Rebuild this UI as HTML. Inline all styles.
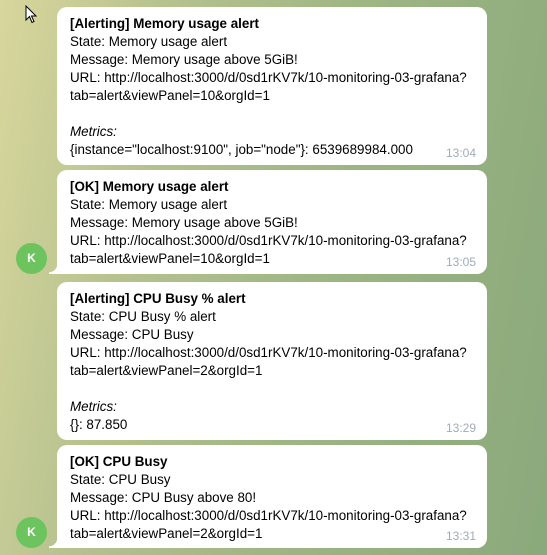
<!DOCTYPE html>
<html><head><meta charset="utf-8"><style>
body{margin:0;width:547px;height:555px;overflow:hidden;background:linear-gradient(100deg,#d8d79c 0%,#b7c28f 25%,#9fb684 55%,#8aa97c 100%);font-family:"Liberation Sans",sans-serif;font-size:13.4px;color:#000;position:relative}
.b{position:absolute;left:57px;width:430px;background:#fff;border-radius:10px;box-sizing:border-box;padding:8px 13px 0 13px;line-height:18px}
.b.t{border-bottom-left-radius:0}
.b.t:before{content:"";position:absolute;left:-8px;bottom:0;width:8px;height:10px;background:radial-gradient(circle at 0 0,transparent 8px,#fff 8.5px)}
.b div{white-space:nowrap}
.h{font-weight:bold}
.tm{position:absolute;right:11px;bottom:3px;color:#a0acb6;font-size:12px}
.av{position:absolute;left:16px;width:31px;height:31px;border-radius:50%;background:#6dc45f;color:#fff;font-size:12px;font-weight:bold;text-align:center;line-height:31px}
</style></head><body>
<svg style="position:absolute;left:25px;top:5px" width="14" height="20" viewBox="0 0 14 20"><path d="M1 1 L1 15 L4.5 11.5 L7 17.5 L9 16.5 L6.5 11 L11 11 Z" fill="#fff" stroke="#000" stroke-width="1"/></svg>
<div class="b" style="top:7px;height:158px">
<div class="h">[Alerting] Memory usage alert</div>
<div>State: Memory usage alert</div>
<div>Message: Memory usage above 5GiB!</div>
<div>URL: http://localhost:3000/d/0sd1rKV7k/10-monitoring-03-grafana?</div>
<div>tab=alert&amp;viewPanel=10&amp;orgId=1</div>
<div>&nbsp;</div>
<div><i>Metrics:</i></div>
<div>{instance="localhost:9100", job="node"}: 6539689984.000</div>
<span class="tm">13:04</span></div>
<div class="b t" style="top:170px;height:104px">
<div class="h">[OK] Memory usage alert</div>
<div>State: Memory usage alert</div>
<div>Message: Memory usage above 5GiB!</div>
<div>URL: http://localhost:3000/d/0sd1rKV7k/10-monitoring-03-grafana?</div>
<div>tab=alert&amp;viewPanel=10&amp;orgId=1</div>
<span class="tm">13:05</span></div>
<div class="av" style="top:243px">K</div>
<div class="b" style="top:282px;height:158px">
<div class="h">[Alerting] CPU Busy % alert</div>
<div>State: CPU Busy % alert</div>
<div>Message: CPU Busy</div>
<div>URL: http://localhost:3000/d/0sd1rKV7k/10-monitoring-03-grafana?</div>
<div>tab=alert&amp;viewPanel=2&amp;orgId=1</div>
<div>&nbsp;</div>
<div><i>Metrics:</i></div>
<div>{}: 87.850</div>
<span class="tm">13:29</span></div>
<div class="b t" style="top:445px;height:103px">
<div class="h">[OK] CPU Busy</div>
<div>State: CPU Busy</div>
<div>Message: CPU Busy above 80!</div>
<div>URL: http://localhost:3000/d/0sd1rKV7k/10-monitoring-03-grafana?</div>
<div>tab=alert&amp;viewPanel=2&amp;orgId=1</div>
<span class="tm">13:31</span></div>
<div class="av" style="top:517px">K</div>
</body></html>
